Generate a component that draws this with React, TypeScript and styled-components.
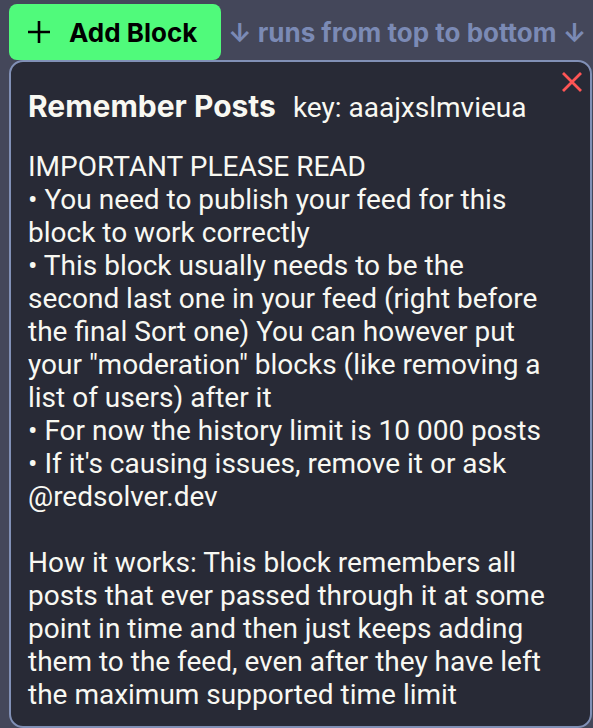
import React from "react";
import styled, { createGlobalStyle } from "styled-components";

const Global = createGlobalStyle`
  html, body { margin: 0; padding: 0; background: #44475a; overflow: hidden; }
  body { width: 593px; height: 728px; }
`;

const Page = styled.div`
  padding: 4px 0 0 9px;
  box-sizing: border-box;
  width: 593px;
  height: 728px;
  display: flex;
  flex-direction: column;
`;

const Toolbar = styled.div`
  display: flex;
  align-items: center;
  gap: 7px;
  height: 56px;
`;

const AddButton = styled.button`
  display: flex;
  align-items: center;
  gap: 18px;
  height: 56px;
  width: 212px;
  padding: 0 0 0 18px;
  border: none;
  border-radius: 8px;
  background: #50fa7b;
  color: #000;
  font-family: Inter, "Liberation Sans", sans-serif;
  font-weight: 700;
  font-size: 26px;
  cursor: pointer;
`;

const Hint = styled.div`
  font-family: Inter, "Liberation Sans", sans-serif;
  font-weight: 700;
  font-size: 26px;
  color: #7b8ab5;
  white-space: nowrap;
`;

const Card = styled.div`
  position: relative;
  flex: 1;
  width: 583px;
  box-sizing: border-box;
  border: 2px solid #8190b6;
  border-radius: 14px;
  background: #282a36;
  padding: 26px 17px 0 17px;
  color: #f8f8f2;
`;

const TitleRow = styled.div`
  display: flex;
  align-items: baseline;
  gap: 17px;
  line-height: 36px;
`;

const Title = styled.h2`
  margin: 0;
  font-family: Inter, "Liberation Sans", sans-serif;
  font-weight: 700;
  font-size: 30px;
`;

const Key = styled.span`
  font-family: Roboto, "Liberation Sans", sans-serif;
  font-size: 28px;
`;

const Close = styled.button`
  position: absolute;
  top: 8px;
  right: 6px;
  background: none;
  border: none;
  padding: 0;
  width: 24px;
  height: 24px;
  cursor: pointer;
`;

const Body = styled.div`
  margin-top: 24px;
  font-family: Roboto, "Liberation Sans", sans-serif;
  font-size: 28px;
  line-height: 33px;
  white-space: pre;
`;

const text = `IMPORTANT PLEASE READ
• You need to publish your feed for this
block to work correctly
• This block usually needs to be the
second last one in your feed (right before
the final Sort one) You can however put
your "moderation" blocks (like removing a
list of users) after it
• For now the history limit is 10 000 posts
• If it's causing issues, remove it or ask
@redsolver.dev

How it works: This block remembers all
posts that ever passed through it at some
point in time and then just keeps adding
them to the feed, even after they have left
the maximum supported time limit`;

export default function App() {
  return (
    <>
      <Global />
      <Page>
        <Toolbar>
          <AddButton>
            <svg width="24" height="24" viewBox="0 0 24 24" fill="none" stroke="#000" strokeWidth="2.6" strokeLinecap="butt">
              <path d="M12 1v22M1 12h22" />
            </svg>
            Add Block
          </AddButton>
          <Hint>↓ runs from top to bottom ↓</Hint>
        </Toolbar>
        <Card>
          <Close aria-label="remove">
            <svg width="24" height="24" viewBox="0 0 24 24" stroke="#ff5555" strokeWidth="2.8" strokeLinecap="butt">
              <path d="M3 3l18 18M21 3L3 21" />
            </svg>
          </Close>
          <TitleRow>
            <Title>Remember Posts</Title>
            <Key>key: aaajxslmvieua</Key>
          </TitleRow>
          <Body>{text}</Body>
        </Card>
      </Page>
    </>
  );
}
